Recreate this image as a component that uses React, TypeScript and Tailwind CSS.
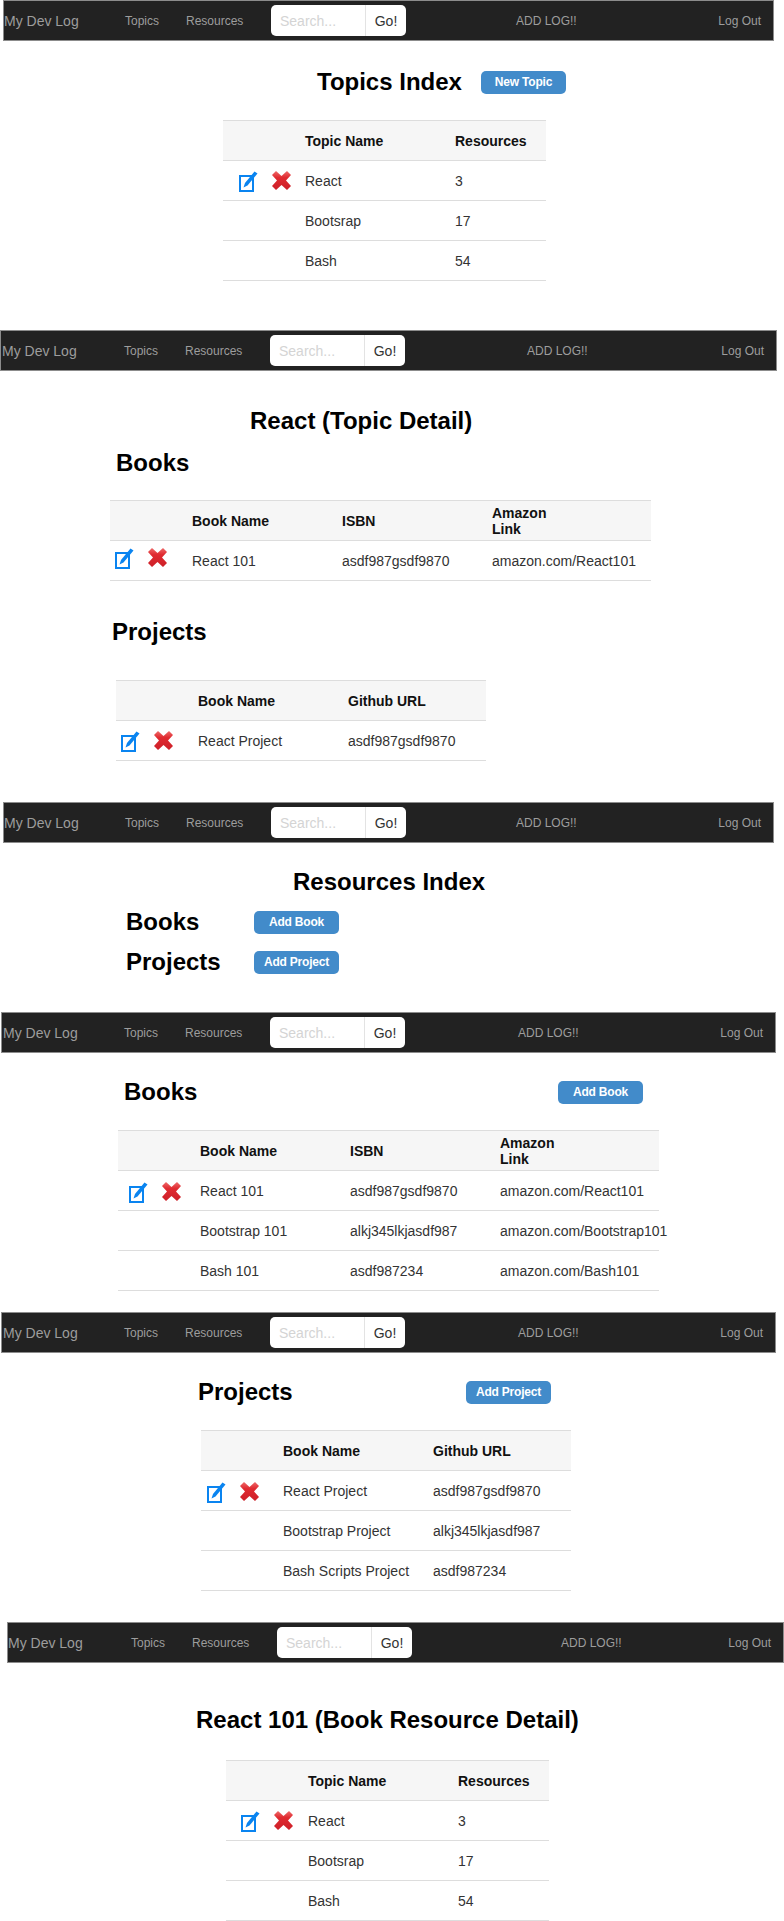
const FONT = "font-['Liberation_Sans',Arial,sans-serif]";

type NavProps = {
  frame: string;
  brand: string;
  addGap: string;
};

function Nav({ frame, brand, addGap }: NavProps) {
  return (
    <nav className={`box-border flex h-[41px] items-center border border-[#8c8c8c] bg-[#222222] text-xs text-[#9d9d9d] ${frame}`}>
      <a className={`shrink-0 text-sm ${brand}`}>My Dev Log</a>
      <a className="w-[61px] shrink-0">Topics</a>
      <a className="w-[85px] shrink-0">Resources</a>
      <div className="flex h-[31px] w-[135px] shrink-0 overflow-hidden rounded-[5px] bg-white text-sm">
        <span className="flex w-[95px] items-center border-r border-[#e3e3e3] pl-[9px] text-[#d4d4d4]">Search...</span>
        <span className="flex flex-1 items-center justify-center text-[#333333]">Go!</span>
      </div>
      <a className={`shrink-0 ${addGap}`}>ADD LOG!!</a>
      <a className="ml-auto mr-[12px] shrink-0">Log Out</a>
    </nav>
  );
}

function EditIcon() {
  return (
    <svg width="19" height="22" viewBox="0 0 19 22" className="shrink-0">
      <rect x="1" y="6" width="13" height="15" fill="none" stroke="#0a84f0" strokeWidth="2" />
      <path d="M4.5 17.5 L6 13 L15.5 1.5 L18.5 3.5 L8.5 15.5 Z" fill="#0a84f0" />
    </svg>
  );
}

function DeleteIcon() {
  return (
    <svg width="19" height="19" viewBox="0 0 19 19" className="mb-[1px] ml-[14px] shrink-0">
      <defs>
        <linearGradient id="redx" x1="0" y1="0" x2="0" y2="1">
          <stop offset="0" stopColor="#ee6a6a" />
          <stop offset="0.35" stopColor="#e02a30" />
          <stop offset="1" stopColor="#cc1f28" />
        </linearGradient>
      </defs>
      <path
        d="M4 0 L9.5 5 L15 0 L19 4 L14 9.5 L19 15 L15 19 L9.5 14 L4 19 L0 15 L5 9.5 L0 4 Z"
        fill="url(#redx)"
      />
    </svg>
  );
}

type TableProps = {
  frame: string;
  iconPad: string;
  cols: string[];
  head: React.ReactNode[];
  rows: string[][];
};

function DataTable({ frame, iconPad, cols, head, rows }: TableProps) {
  return (
    <table className={`table-fixed border-separate border-spacing-0 text-sm ${frame}`}>
      <colgroup>
        <col className="w-[82px]" />
        {cols.map((c, i) => (
          <col key={i} className={c} />
        ))}
      </colgroup>
      <thead>
        <tr>
          <th className="h-[41px] border-y border-[#dddddd] bg-[#f6f6f6]" />
          {head.map((h, i) => (
            <th key={i} className="h-[41px] border-y border-[#dddddd] bg-[#f6f6f6] p-0 text-left font-bold leading-4 text-[#111111]">
              {h}
            </th>
          ))}
        </tr>
      </thead>
      <tbody>
        {rows.map((row, i) => (
          <tr key={row[0]}>
            <td className="h-[40px] border-b border-[#dddddd] p-0">
              {i === 0 && (
                <div className={`flex items-center ${iconPad}`}>
                  <EditIcon />
                  <DeleteIcon />
                </div>
              )}
            </td>
            {row.map((cell) => (
              <td key={cell} className="h-[40px] whitespace-nowrap border-b border-[#dddddd] p-0 text-[#333333]">
                {cell}
              </td>
            ))}
          </tr>
        ))}
      </tbody>
    </table>
  );
}

function Heading({ frame, children }: { frame: string; children: React.ReactNode }) {
  return <h2 className={`flex h-[28px] items-center text-2xl font-bold leading-7 text-black ${frame}`}>{children}</h2>;
}

function ActionButton({ label }: { label: string }) {
  return (
    <button className="flex h-[23px] w-[85px] shrink-0 items-center justify-center rounded-[5px] bg-[#428bca] text-xs font-bold tracking-[-0.2px] text-white">
      {label}
    </button>
  );
}

const TOPIC_HEAD = ['Topic Name', 'Resources'];
const TOPIC_ROWS = [
  ['React', '3'],
  ['Bootsrap', '17'],
  ['Bash', '54'],
];
const AMAZON = (
  <>
    Amazon
    <br />
    Link
  </>
);

export default function App() {
  return (
    <div className={`h-[1921px] w-[784px] overflow-hidden bg-white ${FONT}`}>
      <Nav frame="ml-[3px] w-[771px]" brand="w-[121px]" addGap="ml-[110px]" />
      <Heading frame="mt-[27px] pl-[317px]">
        <span className="w-[164px]">Topics Index</span>
        <ActionButton label="New Topic" />
      </Heading>
      <DataTable
        frame="ml-[223px] mt-[24px] w-[323px]"
        iconPad="pl-[16px]"
        cols={['w-[150px]', 'w-[91px]']}
        head={TOPIC_HEAD}
        rows={TOPIC_ROWS}
      />

      <Nav frame="mt-[49px] w-[777px] pl-[1px]" brand="w-[122px]" addGap="ml-[122px]" />
      <Heading frame="mt-[36px] pl-[250px]">React (Topic Detail)</Heading>
      <Heading frame="mt-[14px] pl-[116px]">Books</Heading>
      <DataTable
        frame="ml-[110px] mt-[23px] w-[541px]"
        iconPad="pb-[5px] pl-[5px]"
        cols={['w-[150px]', 'w-[150px]', 'w-[159px]']}
        head={['Book Name', 'ISBN', AMAZON]}
        rows={[['React 101', 'asdf987gsdf9870', 'amazon.com/React101']]}
      />
      <Heading frame="mt-[37px] pl-[112px]">Projects</Heading>
      <DataTable
        frame="ml-[116px] mt-[34px] w-[370px]"
        iconPad="pl-[5px]"
        cols={['w-[150px]', 'w-[138px]']}
        head={['Book Name', 'Github URL']}
        rows={[['React Project', 'asdf987gsdf9870']]}
      />

      <Nav frame="ml-[3px] mt-[41px] w-[771px]" brand="w-[121px]" addGap="ml-[110px]" />
      <Heading frame="mt-[25px] pl-[293px]">Resources Index</Heading>
      <Heading frame="mt-[12px] pl-[126px]">
        <span className="w-[128px]">Books</span>
        <ActionButton label="Add Book" />
      </Heading>
      <Heading frame="mt-[12px] pl-[126px]">
        <span className="w-[128px]">Projects</span>
        <ActionButton label="Add Project" />
      </Heading>

      <Nav frame="ml-[1px] mt-[36px] w-[775px] pl-[1px]" brand="w-[121px]" addGap="ml-[113px]" />
      <Heading frame="mt-[25px] pl-[124px]">
        <span className="w-[434px]">Books</span>
        <ActionButton label="Add Book" />
      </Heading>
      <DataTable
        frame="ml-[118px] mt-[24px] w-[541px]"
        iconPad="pt-[2px] pl-[11px]"
        cols={['w-[150px]', 'w-[150px]', 'w-[159px]']}
        head={['Book Name', 'ISBN', AMAZON]}
        rows={[
          ['React 101', 'asdf987gsdf9870', 'amazon.com/React101'],
          ['Bootstrap 101', 'alkj345lkjasdf987', 'amazon.com/Bootstrap101'],
          ['Bash 101', 'asdf987234', 'amazon.com/Bash101'],
        ]}
      />

      <Nav frame="ml-[1px] mt-[21px] w-[775px] pl-[1px]" brand="w-[121px]" addGap="ml-[113px]" />
      <Heading frame="mt-[25px] pl-[198px]">
        <span className="w-[268px]">Projects</span>
        <ActionButton label="Add Project" />
      </Heading>
      <DataTable
        frame="ml-[201px] mt-[24px] w-[370px]"
        iconPad="pt-[2px] pl-[6px]"
        cols={['w-[150px]', 'w-[138px]']}
        head={['Book Name', 'Github URL']}
        rows={[
          ['React Project', 'asdf987gsdf9870'],
          ['Bootstrap Project', 'alkj345lkjasdf987'],
          ['Bash Scripts Project', 'asdf987234'],
        ]}
      />

      <Nav frame="ml-[7px] mt-[31px] w-[777px]" brand="w-[123px]" addGap="ml-[149px]" />
      <Heading frame="mt-[43px] pl-[196px]">React 101 (Book Resource Detail)</Heading>
      <DataTable
        frame="ml-[226px] mt-[26px] w-[323px]"
        iconPad="pl-[15px]"
        cols={['w-[150px]', 'w-[91px]']}
        head={TOPIC_HEAD}
        rows={TOPIC_ROWS}
      />
    </div>
  );
}
